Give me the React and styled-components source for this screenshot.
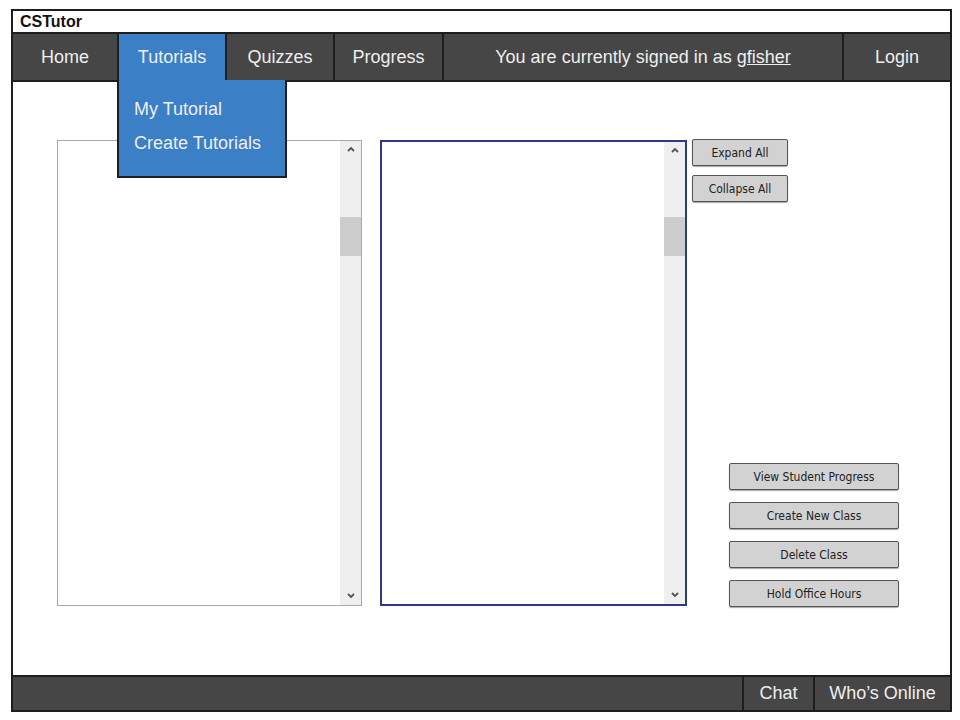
import React from "react";
import styled, { createGlobalStyle } from "styled-components";

const Global = createGlobalStyle`
  html, body { margin: 0; padding: 0; background: #fff; }
  body { font-family: "Liberation Sans", Arial, sans-serif; }
`;

const Frame = styled.div`
  box-sizing: border-box;
  margin: 9px 0 0 11px;
  width: 941px;
  height: 703px;
  border: 2px solid #1e1e1e;
  display: flex;
  flex-direction: column;
  background: #fff;
`;

const TitleBar = styled.div`
  height: 21px;
  padding-left: 7px;
  font-weight: bold;
  font-size: 16px;
  line-height: 21px;
  color: #111;
`;

const NavBar = styled.nav`
  box-sizing: border-box;
  height: 50px;
  display: flex;
  background: #464646;
  border-top: 2px solid #1e1e1e;
  border-bottom: 2px solid #1e1e1e;
`;

const NavItem = styled.div`
  box-sizing: border-box;
  width: ${(p) => p.$w}px;
  flex: ${(p) => (p.$grow ? "1" : "none")};
  display: flex;
  align-items: center;
  justify-content: center;
  color: #eeeeee;
  font-size: 18px;
  background: ${(p) => (p.$active ? "#3b7fc6" : "transparent")};
  border-right: ${(p) => (p.$last ? "none" : "2px solid #1e1e1e")};
  u { text-decoration: underline; }
`;

const Main = styled.div`
  position: relative;
  flex: 1;
  display: flex;
  align-items: flex-start;
  padding: 58px 0 0 44px;
`;

const Dropdown = styled.div`
  position: absolute;
  left: 104px;
  top: -2px;
  box-sizing: border-box;
  width: 170px;
  height: 98px;
  background: #3b7fc6;
  border: 2px solid #1e1e1e;
  border-top: none;
  padding: 19px 0 0 15px;
  display: flex;
  flex-direction: column;
  gap: 14px;
  z-index: 2;
`;

const DropItem = styled.div`
  color: #eeeeee;
  font-size: 18px;
  line-height: 20px;
`;

const ListBox = styled.div`
  box-sizing: border-box;
  width: ${(p) => p.$w}px;
  height: 466px;
  border: ${(p) => (p.$focus ? "2px solid #2b3b86" : "1px solid #a9a9a9")};
  display: flex;
  justify-content: flex-end;
  background: #fff;
  margin-right: ${(p) => p.$mr}px;
`;

const Scroll = styled.div`
  width: 21px;
  background: #efefef;
  display: flex;
  flex-direction: column;
  justify-content: space-between;
  align-items: center;
  padding: 5px 0 6px;
  box-sizing: border-box;
  position: relative;
`;

const Thumb = styled.div`
  position: absolute;
  left: 0;
  right: 0;
  top: ${(p) => p.$top}px;
  height: 39px;
  background: #cdcdcd;
`;

const Side = styled.div`
  height: 468px;
  display: flex;
  flex-direction: column;
  justify-content: space-between;
  margin-top: -1px;
`;

const Group = styled.div`
  display: flex;
  flex-direction: column;
  gap: ${(p) => p.$gap}px;
  margin-left: ${(p) => p.$ml || 0}px;
`;

const SketchButton = styled.div`
  box-sizing: border-box;
  width: ${(p) => p.$w}px;
  height: 27px;
  background: #d2d2d2;
  border: 1.5px solid #555;
  border-radius: 2px;
  box-shadow: 0 1px 1px rgba(0,0,0,0.35);
  display: flex;
  align-items: center;
  justify-content: center;
  font-family: "Comic Sans MS", "DejaVu Sans Condensed", "DejaVu Sans", sans-serif;
  font-size: 12px;
  color: #222;
`;

const Footer = styled.div`
  box-sizing: border-box;
  height: 35px;
  display: flex;
  justify-content: flex-end;
  background: #464646;
  border-top: 2px solid #1e1e1e;
`;

const FootItem = styled.div`
  box-sizing: border-box;
  width: ${(p) => p.$w}px;
  display: flex;
  align-items: center;
  justify-content: center;
  color: #eeeeee;
  font-size: 18px;
  border-left: 2px solid #1e1e1e;
`;

const Chevron = ({ up }) => (
  <svg width="8" height="6" viewBox="0 0 8 6">
    <path
      d={up ? "M1 5 L4 2 L7 5" : "M1 1 L4 4 L7 1"}
      fill="none"
      stroke="#555"
      strokeWidth="1.8"
    />
  </svg>
);

const Scrollbar = ({ thumbTop }) => (
  <Scroll>
    <Chevron up />
    <Thumb $top={thumbTop} />
    <Chevron />
  </Scroll>
);

export default function App() {
  return (
    <>
      <Global />
      <Frame>
        <TitleBar>CSTutor</TitleBar>
        <NavBar>
          <NavItem $w={106}>Home</NavItem>
          <NavItem $w={108} $active>Tutorials</NavItem>
          <NavItem $w={108}>Quizzes</NavItem>
          <NavItem $w={109}>Progress</NavItem>
          <NavItem $w={400}>
            <span>
              You are currently signed in as <u>gfisher</u>
            </span>
          </NavItem>
          <NavItem $grow $last>Login</NavItem>
        </NavBar>
        <Main>
          <Dropdown>
            <DropItem>My Tutorial</DropItem>
            <DropItem>Create Tutorials</DropItem>
          </Dropdown>
          <ListBox $w={305} $mr={18}>
            <Scrollbar thumbTop={76} />
          </ListBox>
          <ListBox $w={307} $mr={5} $focus>
            <Scrollbar thumbTop={75} />
          </ListBox>
          <Side>
            <Group $gap={9}>
              <SketchButton $w={96}>Expand All</SketchButton>
              <SketchButton $w={96}>Collapse All</SketchButton>
            </Group>
            <Group $gap={12} $ml={37}>
              <SketchButton $w={170}>View Student Progress</SketchButton>
              <SketchButton $w={170}>Create New Class</SketchButton>
              <SketchButton $w={170}>Delete Class</SketchButton>
              <SketchButton $w={170}>Hold Office Hours</SketchButton>
            </Group>
          </Side>
        </Main>
        <Footer>
          <FootItem $w={71}>Chat</FootItem>
          <FootItem $w={137}>Who’s Online</FootItem>
        </Footer>
      </Frame>
    </>
  );
}
